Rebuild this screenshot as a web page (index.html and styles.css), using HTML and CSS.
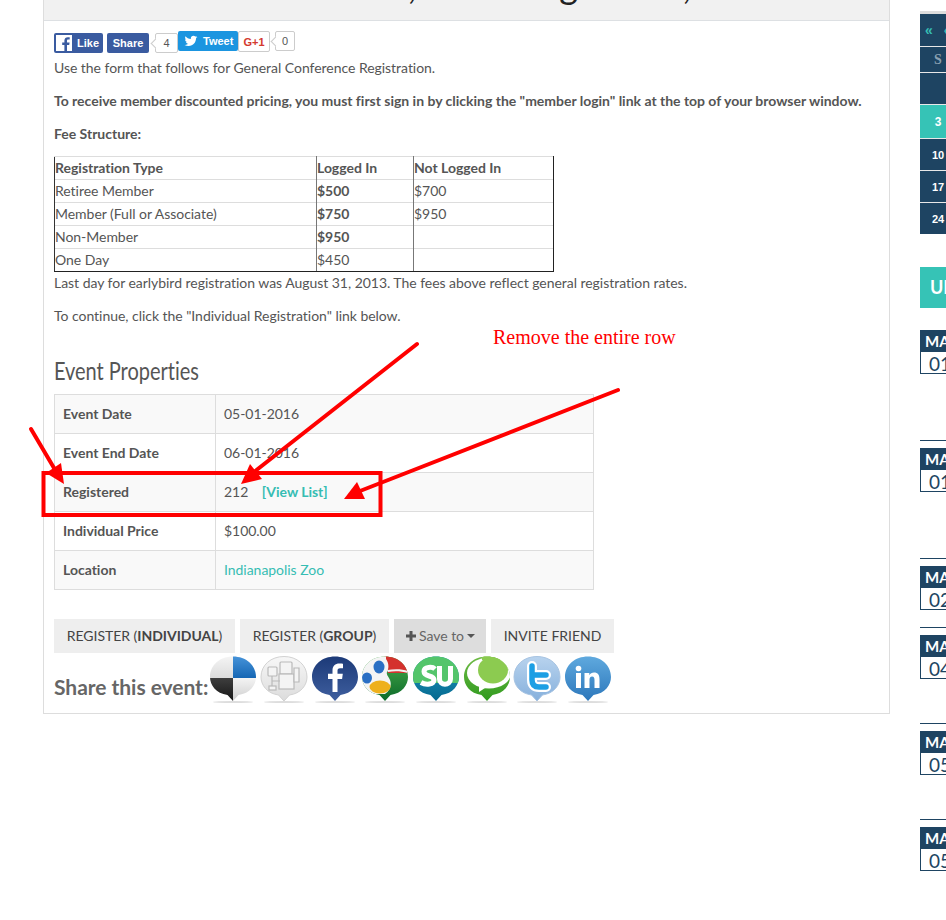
FILE: index.html
```html
<!DOCTYPE html>
<html lang="en">
<head>
<meta charset="utf-8">
<title>Event Registration</title>
<link rel="stylesheet" href="styles.css">
</head>
<body>
<svg class="defs" width="0" height="0" aria-hidden="true">
  <defs>
    <path id="bub" d="M25 47 L19.500 41 C8 39.500 2 31 2 23 C2 11 12 2.500 25 2.500 C38 2.500 48 11 48 23 C48 31 42 39.500 30.500 41 Z"/>
    <clipPath id="bubclip"><use href="#bub"/></clipPath>
    <linearGradient id="gFb" x1="0" y1="0" x2="0" y2="1"><stop offset="0" stop-color="#1c3a78"/><stop offset="1" stop-color="#3f5f9f"/></linearGradient>
    <linearGradient id="gGray" x1="0" y1="0" x2="0" y2="1"><stop offset="0" stop-color="#f7f7f7"/><stop offset="1" stop-color="#dcdcdc"/></linearGradient>
    <linearGradient id="gLite" x1="0" y1="0" x2="0" y2="1"><stop offset="0" stop-color="#f4f4f4"/><stop offset="1" stop-color="#c9c9c9"/></linearGradient>
    <linearGradient id="gBlk" x1="0" y1="0" x2="0" y2="1"><stop offset="0" stop-color="#3e3e3e"/><stop offset="1" stop-color="#111"/></linearGradient>
    <linearGradient id="gDel" x1="0" y1="0" x2="0" y2="1"><stop offset="0" stop-color="#4b98dd"/><stop offset="1" stop-color="#1566b4"/></linearGradient>
    <linearGradient id="gGreen" x1="0" y1="0" x2="0" y2="1"><stop offset="0" stop-color="#49ad4b"/><stop offset="1" stop-color="#0c6a2a"/></linearGradient>
    <linearGradient id="gSu" x1="0" y1="0" x2="0" y2="1"><stop offset="0" stop-color="#1f9bc0"/><stop offset="1" stop-color="#05688f"/></linearGradient>
    <linearGradient id="gTech" x1="0" y1="0" x2="0" y2="1"><stop offset="0" stop-color="#6fbb45"/><stop offset="1" stop-color="#2f9a1e"/></linearGradient>
    <linearGradient id="gTw" x1="0" y1="0" x2="0" y2="1"><stop offset="0" stop-color="#b8d3ee"/><stop offset="1" stop-color="#86b0dc"/></linearGradient>
    <linearGradient id="gIn" x1="0" y1="0" x2="0" y2="1"><stop offset="0" stop-color="#5fa9de"/><stop offset="1" stop-color="#2c77bb"/></linearGradient>
    <ellipse id="shadow" cx="25" cy="48" rx="20" ry="1" fill="#ddd"/>
  </defs>
</svg>

<div class="page">
  <main class="panel">
    <div class="panel-title">
      <h1 class="title-line"><span>,</span><span>g</span><span>,</span></h1>
    </div>
    <div class="panel-body">
      <div class="social">
        <a class="sb sb-fb">
          <svg class="fb-glyph" viewBox="0 0 16 16" width="16" height="16"><rect width="16" height="16" fill="#fff"/><path d="M11 16V10h2.200l.4-2.600H11V5.900c0-.8.3-1.300 1.300-1.300h1.400V2.300C13.400 2.200 12.600 2.200 11.800 2.200 9.800 2.200 8.400 3.400 8.400 5.600v1.800H6.200V10h2.200v6z" fill="#3a5ba0"/></svg>Like</a>
        <a class="sb sb-share">Share</a>
        <span class="count count-fb">4</span>
        <a class="sb sb-tw">
          <svg viewBox="0 0 24 24" width="14" height="14"><path fill="#fff" d="M23 5.100c-.8.400-1.700.600-2.600.7.900-.6 1.600-1.400 2-2.500-.9.500-1.800.9-2.900 1.100C18.700 3.500 17.500 3 16.200 3c-2.500 0-4.500 2-4.500 4.500 0 .4 0 .7.100 1C8 8.300 4.700 6.500 2.500 3.800 2.100 4.500 1.900 5.200 1.900 6.100c0 1.600.8 2.900 2 3.700-.7 0-1.400-.2-2-.6v.1c0 2.200 1.600 4 3.600 4.400-.4.100-.8.200-1.200.2-.3 0-.6 0-.9-.1.600 1.800 2.300 3.100 4.200 3.100-1.500 1.200-3.500 1.900-5.600 1.900-.4 0-.7 0-1.100-.1 2 1.300 4.400 2 6.900 2 8.300 0 12.800-6.900 12.800-12.800v-.6c.9-.6 1.700-1.400 2.400-2.300z"/></svg>Tweet</a>
        <a class="sb sb-g">G+1</a>
        <span class="count count-g">0</span>
      </div>

      <p>Use the form that follows for General Conference Registration.</p>
      <p><strong>To receive member discounted pricing, you must first sign in by clicking the "member login" link at the top of your browser window.</strong></p>
      <p><strong>Fee Structure:</strong></p>

      <table class="fees">
        <tr><th>Registration Type</th><th>Logged In</th><th>Not Logged In</th></tr>
        <tr><td>Retiree Member</td><td><strong>$500</strong></td><td>$700</td></tr>
        <tr><td>Member (Full or Associate)</td><td><strong>$750</strong></td><td>$950</td></tr>
        <tr><td>Non-Member</td><td><strong>$950</strong></td><td></td></tr>
        <tr><td>One Day</td><td>$450</td><td></td></tr>
      </table>

      <p>Last day for earlybird registration was August 31, 2013. The fees above reflect general registration rates.</p>
      <p>To continue, click the "Individual Registration" link below.</p>

      <h3 class="props-title">Event Properties</h3>
      <table class="props">
        <tr><th>Event Date</th><td>05-01-2016</td></tr>
        <tr><th>Event End Date</th><td>06-01-2016</td></tr>
        <tr><th>Registered</th><td>212 <a class="link list-link">[View List]</a></td></tr>
        <tr><th>Individual Price</th><td>$100.00</td></tr>
        <tr><th>Location</th><td><a class="link">Indianapolis Zoo</a></td></tr>
      </table>

      <div class="actions">
        <a class="btn btn-ind">REGISTER (<b>INDIVIDUAL</b>)</a>
        <a class="btn btn-grp">REGISTER (<b>GROUP</b>)</a>
        <a class="btn btn-save"><svg class="plus" viewBox="0 0 12 12" width="12" height="12"><path d="M4.500 1h3v3.500H11v3H7.500V11h-3V7.500H1v-3h3.500z" fill="#555"/></svg>Save to<i class="caret"></i></a>
        <a class="btn btn-inv">INVITE FRIEND</a>
      </div>

      <div class="share">
        <span class="share-label">Share this event:</span>
        <div class="share-icons">
          <svg viewBox="0 0 50 50" width="50" height="50"><use href="#shadow"/><g clip-path="url(#bubclip)"><rect width="25" height="24" fill="url(#gGray)"/><rect x="25" width="25" height="24" fill="url(#gDel)"/><rect y="24" width="25" height="26" fill="url(#gBlk)"/><rect x="25" y="24" width="25" height="26" fill="url(#gLite)"/></g></svg>

          <svg viewBox="0 0 50 50" width="50" height="50"><use href="#shadow"/><use href="#bub" fill="url(#gGray)" stroke="#d2d2d2"/><g fill="#f4f4f4" stroke="#b9b9b9" stroke-width="1.200"><rect x="9" y="13" width="9" height="9" rx="1"/><rect x="21" y="8" width="12" height="12" rx="1"/><rect x="20" y="20" width="15" height="15"/><path d="M35 14h5v14h-5zM13 22v10M21 27h-8"/><rect x="10" y="32" width="7" height="4"/></g></svg>

          <svg viewBox="0 0 50 50" width="50" height="50"><use href="#shadow"/><use href="#bub" fill="url(#gFb)"/><path fill="#fff" d="M27.500 38V25h4.600l.7-5.200h-5.300v-3c0-1.500.5-2.500 2.600-2.500H33V9.700C32.500 9.600 31 9.500 29.300 9.500c-4 0-6.800 2.400-6.800 6.900v3.400H18V25h4.500v13z"/></svg>

          <svg viewBox="0 0 50 50" width="50" height="50"><use href="#shadow"/><use href="#bub" fill="url(#gGreen)"/><g clip-path="url(#bubclip)"><path d="M24 0h26v19H28z" fill="#d4312d"/><path d="M27 16c8-1 15-1 21 1v2c-7-2-14-2-20-1z" fill="#f2f2f2"/><path d="M0 0h26v5c3 4 3 9 1 13-1 3 2 5 3 8 2 5 0 11-5 14H0z" fill="#f4f4f4"/><ellipse cx="19" cy="13" rx="5.500" ry="6.500" fill="#2a6fc4"/><ellipse cx="7" cy="24" rx="5" ry="5.500" fill="#2a6fc4"/><ellipse cx="20" cy="33" rx="10.500" ry="6.500" fill="#eeb01c"/></g></svg>

          <svg viewBox="0 0 50 50" width="50" height="50"><use href="#shadow"/><use href="#bub" fill="url(#gSu)"/><g clip-path="url(#bubclip)"><rect width="50" height="29" fill="#54c56b"/></g><path d="M24 15c-2.500-2.500-11-2.500-11 2.500 0 6 10 3 10 8.500 0 4.500-8 5.500-13 2.500M28.500 12v13c0 7 11 7 11 0V12" fill="none" stroke="#fff" stroke-width="5"/></svg>

          <svg viewBox="0 0 50 50" width="50" height="50"><use href="#shadow"/><use href="#bub" fill="url(#gTech)"/><g clip-path="url(#bubclip)"><ellipse cx="27" cy="19" rx="22" ry="15.500" fill="#fff"/><path d="M17 30v8l9-6z" fill="#fff"/><ellipse cx="31" cy="16" rx="15" ry="13.500" fill="#8ccb50"/><path d="M20 0h30v6H20z" fill="#8ccb50"/></g></svg>

          <svg viewBox="0 0 50 50" width="50" height="50"><use href="#shadow"/><use href="#bub" fill="url(#gTw)" stroke="#a8c4e2"/><g fill="none" stroke-linecap="round" stroke-linejoin="round"><path d="M20 12V26Q20 33 27 33H34M20 21H34" stroke="#fff" stroke-width="10"/><path d="M20 12V26Q20 33 27 33H34M20 21H34" stroke="#1c9fe4" stroke-width="5.500"/></g></svg>

          <svg viewBox="0 0 50 50" width="50" height="50"><use href="#shadow"/><use href="#bub" fill="url(#gIn)"/><g fill="#fff"><circle cx="15.500" cy="14.500" r="2.800"/><rect x="13" y="19" width="5" height="15"/><path d="M21.500 19h4.800v2.200c1-1.600 2.600-2.600 4.700-2.600 4 0 5.500 2.600 5.500 6.600V34h-5v-8c0-2-.6-3.400-2.400-3.400-1.900 0-2.600 1.500-2.600 3.400v8h-5z"/></g></svg>
        </div>
      </div>
    </div>
  </main>

  <aside class="side">
    <div class="cal">
      <div class="cal-row cal-nav"><span class="cal-cell">«<span class="cal-next">‹</span></span></div>
      <div class="cal-row cal-dow"><span class="cal-cell">S</span></div>
      <div class="cal-row cal-blank"><span class="cal-cell"></span></div>
      <div class="cal-row cal-today"><span class="cal-cell">3</span></div>
      <div class="cal-row"><span class="cal-cell">10</span></div>
      <div class="cal-row"><span class="cal-cell">17</span></div>
      <div class="cal-row"><span class="cal-cell">24</span></div>
    </div>
    <div class="upcoming">UPCOMING EVENTS</div>
    <div class="ev ev-first"><div class="ev-date"><span class="ev-mon">MAY</span><span class="ev-day">01</span></div></div>
    <div class="ev ev-tall"><div class="ev-date"><span class="ev-mon">MAY</span><span class="ev-day">01</span></div></div>
    <div class="ev ev-short"><div class="ev-date"><span class="ev-mon">MAY</span><span class="ev-day">02</span></div></div>
    <div class="ev ev-mid"><div class="ev-date"><span class="ev-mon">MAY</span><span class="ev-day">04</span></div></div>
    <div class="ev ev-mid"><div class="ev-date"><span class="ev-mon">MAY</span><span class="ev-day">05</span></div></div>
    <div class="ev"><div class="ev-date"><span class="ev-mon">MAY</span><span class="ev-day">05</span></div></div>
  </aside>
</div>

<svg class="marks" width="946" height="920" viewBox="0 0 946 920" aria-hidden="true">
  <g stroke="#f00" stroke-width="4" stroke-linecap="round" fill="none">
    <line x1="31" y1="429" x2="54" y2="468"/>
    <line x1="417" y1="344" x2="254" y2="472"/>
    <line x1="618" y1="390" x2="360" y2="491"/>
  </g>
  <g fill="#f00">
    <polygon points="46,473 61,463 64,484"/>
    <polygon points="250,464 262,479 241,484"/>
    <polygon points="357,482 365,499 344,499"/>
  </g>
  <rect x="43.500" y="473" width="337" height="42" fill="none" stroke="#f00" stroke-width="4"/>
</svg>
<div class="note">Remove the entire row</div>
</body>
</html>
```
FILE: styles.css
```css
html, body { margin: 0; padding: 0; height: 920px; overflow: hidden; background: #fff; }
body { font-family: Lato, "Liberation Sans", sans-serif; font-size: 14px; line-height: 20px; letter-spacing: -.035px; color: #555; position: relative; }
.defs { position: absolute; }
.page { display: flex; align-items: flex-start; padding-left: 43px; width: 1300px; }

/* main panel */
.panel { width: 847px; flex: none; box-sizing: border-box; border: 1px solid #ddd; border-top: 0; }
.panel-title { height: 20px; background: #f1f1f1; border-bottom: 1px solid #dde0e3; overflow: hidden; }
.title-line { margin: -40px 0 0; height: 50px; display: flex; font: 400 36px/50px Lato, sans-serif; color: #222; }
.title-line span:nth-child(1) { margin-left: 364px; }
.title-line span:nth-child(2) { margin-left: 143px; }
.title-line span:nth-child(3) { margin-left: 105px; }
.panel-body { padding: 10px 10px 9px; }
p { margin: 0 0 13px; }
strong, b { font-weight: 700; letter-spacing: -.015px; }

/* social */
.social { display: flex; align-items: flex-start; height: 27px; font-family: "Liberation Sans", sans-serif; letter-spacing: 0; }
.sb { display: flex; align-items: center; box-sizing: border-box; font-size: 11px; font-weight: 700; line-height: 20px; color: #fff; border-radius: 2px; }
.sb-fb, .sb-share { background: #3a5ba0; height: 20px; margin-top: 2px; }
.sb-fb { width: 49px; padding-left: 2px; gap: 5px; }
.sb-share { width: 42px; margin-left: 4px; justify-content: center; }
.sb-tw { width: 60px; height: 20px; background: #1b95e0; padding-left: 6px; gap: 5px; }
.sb-g { width: 32px; height: 21px; background: #fff; border: 1px solid #ccc; color: #d3382e; justify-content: center; font-size: 11px; }
.count { position: relative; box-sizing: border-box; display: block; background: #fff; border: 1px solid #ccc; border-radius: 2px; font-size: 11px; line-height: 18px; height: 20px; text-align: center; color: #555; }
.count::before { content: ""; position: absolute; left: -4px; top: 6px; width: 6px; height: 6px; background: #fff; border-left: 1px solid #ccc; border-bottom: 1px solid #ccc; transform: rotate(45deg); }
.count-fb { width: 23px; margin: 2px 0 0 6px; }
.count-g { width: 20px; margin-left: 5px; }

/* fee table */
.fees { border-collapse: collapse; width: 500px; table-layout: fixed; margin: -1px 0 1px; }
.fees th, .fees td { height: 22px; padding: 0; text-align: left; font-size: 14px; line-height: 20px; border-top: 1px solid #ddd; border-left: 1px solid #777; border-right: 1px solid #777; }
.fees th { font-weight: 700; letter-spacing: -.015px; }
.fees th:first-child, .fees td:first-child { width: 261px; border-left-color: #333; }
.fees th:nth-child(2), .fees td:nth-child(2) { width: 96px; }
.fees th:last-child, .fees td:last-child { border-right-color: #222; }
.fees tr:last-child td { border-bottom: 1px solid #222; }

/* properties */
.props-title { margin: 28px 0 8px; font-size: 25px; font-weight: 400; line-height: 32px; color: #555; transform: scaleX(.8); transform-origin: left center; }
.props { border-collapse: collapse; width: 540px; table-layout: fixed; margin-bottom: 29px; }
.props th, .props td { height: 38px; box-sizing: content-box; padding: 0 8px; border: 1px solid #ddd; text-align: left; font-size: 14px; line-height: 20px; }
.props th { width: 144px; font-weight: 700; letter-spacing: -.015px; }
.props tr:nth-child(odd) { background: #f9f9f9; }
.link { color: #36bdb3; }
.list-link { font-weight: 700; margin-left: 10px; }

/* actions */
.actions { display: flex; gap: 5px; height: 34px; }
.btn { display: flex; align-items: center; justify-content: center; box-sizing: border-box; height: 34px; background: #eee; color: #444; font-size: 14px; }
.btn-ind { width: 181px; }
.btn-grp { width: 149px; }
.btn-save { width: 92px; background: #ddd; color: #666; }
.btn-inv { width: 123px; }
.plus { margin-right: 2px; }
.caret { display: inline-block; margin-left: 3px; border-top: 4px solid #555; border-left: 4px solid transparent; border-right: 4px solid transparent; }

/* share */
.share { display: flex; align-items: flex-end; margin-top: 1px; }
.share-label { font-size: 21px; font-weight: 700; line-height: 28px; color: #666; margin-bottom: 3px; }
.share-icons { display: flex; gap: .7px; }
.share-icons svg { display: block; flex: none; }

/* side */
.side { width: 330px; flex: none; margin-left: 30px; padding-top: 11px; letter-spacing: 0; }
.cal { border-top: 3px solid #ddd; }
.cal-row { display: flex; align-items: center; height: 31px; background: #1e4462; border-bottom: 1px solid #e8e8e8; box-sizing: content-box; font: 700 11px/16px "Liberation Sans", sans-serif; color: #fff; }
.cal-cell { width: 36px; text-align: center; }
.cal-nav { height: 32px; color: #36bdb3; font-size: 14px; }
.cal-nav .cal-cell { text-align: left; padding-left: 5px; white-space: nowrap; }
.cal-next { margin-left: 11px; }
.cal-dow { height: 25px; color: #8aa0b1; font: 700 14px/16px "Liberation Serif", serif; }
.cal-today { height: 33px; background: #36c3b6; font-size: 12px; }
.cal-row:last-child { border-bottom: 0; }
.upcoming { margin-top: 33px; height: 41px; padding-left: 10px; background: #36c3b6; color: #fff; font-size: 18px; font-weight: 700; line-height: 41px; white-space: nowrap; }
.ev { box-sizing: border-box; padding-top: 7px; border-top: 1px solid #1e4462; }
.ev-first { margin-top: 13px; height: 119px; padding-top: 9px; border-top: 0; }
.ev-tall { height: 118px; }
.ev-short { height: 69px; }
.ev-mid { height: 96px; }
.ev-date { width: 80px; box-sizing: border-box; border: 1px solid #1e4462; border-top: 0; }
.ev-mon { display: block; height: 22px; background: #1e4462; color: #fff; font-size: 15px; font-weight: 700; line-height: 22px; padding-left: 4px; }
.ev-day { display: block; height: 21px; background: #fff; color: #1e4462; font-size: 19px; line-height: 23px; padding-left: 8px; }

/* annotations */
.marks { position: absolute; left: 0; top: 0; pointer-events: none; }
.note { position: absolute; left: 493px; top: 325px; font: 20px/24px "Liberation Serif", serif; letter-spacing: 0; color: #f00; white-space: nowrap; }
```
